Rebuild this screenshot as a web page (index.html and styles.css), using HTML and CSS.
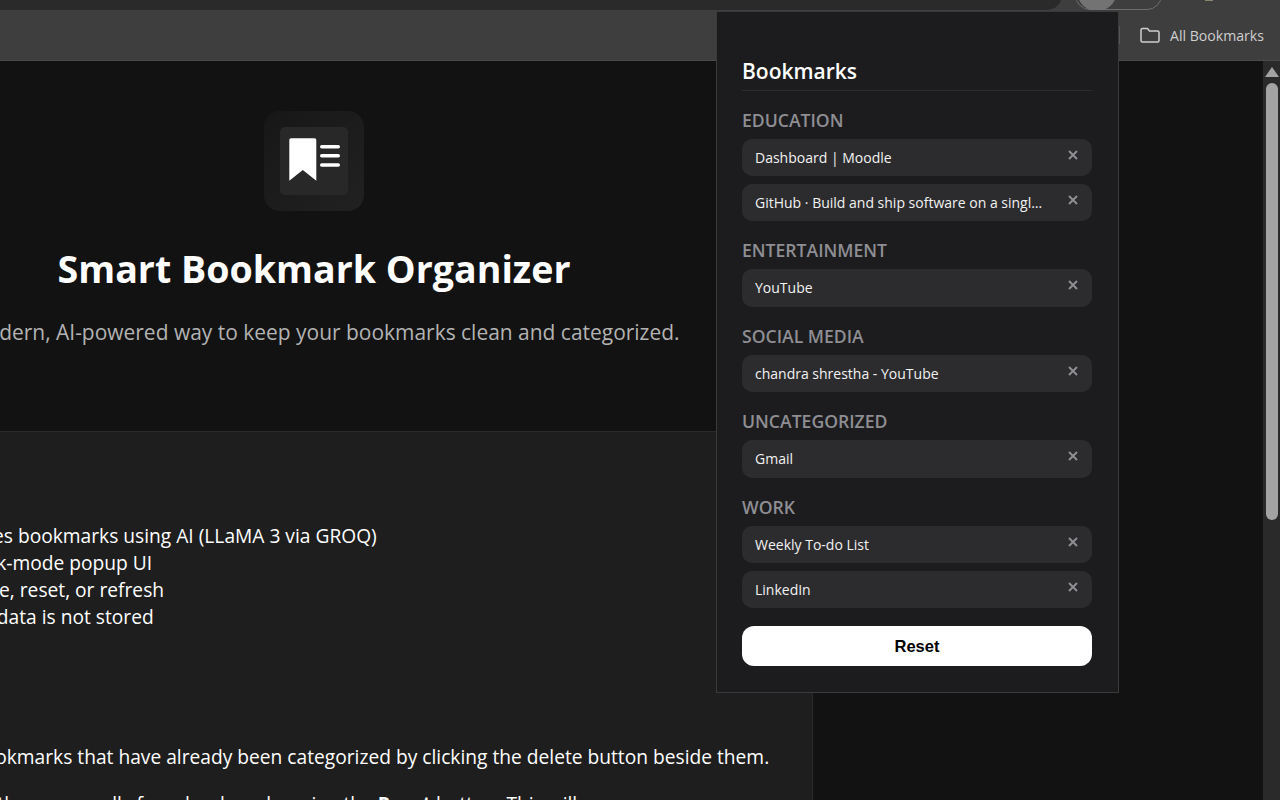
FILE: index.html

```html
<!DOCTYPE html>
<html lang="en">

<head>
  <meta charset="UTF-8">
  <meta name="viewport" content="width=device-width, initial-scale=1.0">
  <title>Smart Bookmark Organizer</title>
  <link rel="stylesheet" href="styles.css">
</head>

<body>
  <header class="toolbar">
    <div class="top-row">
      <div class="omnibox"></div>
      <div class="profile-pill"><span class="avatar"></span></div>
      <span class="ext-dot"></span>
    </div>
    <div class="bookmarks-bar">
      <span class="bar-sep"></span>
      <svg class="folder-icon" width="22" height="18" viewBox="0 0 22 18">
        <path d="M2 4a1.5 1.5 0 0 1 1.5-1.5h5l2 2.5h8a1.5 1.5 0 0 1 1.5 1.5v8a1.5 1.5 0 0 1-1.5 1.5h-15A1.5 1.5 0 0 1 2 14.5z" fill="none" stroke="#cfcfcf" stroke-width="1.5" stroke-linejoin="round" />
      </svg>
      <span class="bar-label">All Bookmarks</span>
    </div>
  </header>

  <div class="viewport">
    <main class="page">
      <section class="hero">
        <div class="logo">
          <div class="logo-inner">
            <svg width="68" height="68" viewBox="0 0 68 68">
              <path d="M9.3 13a1.7 1.7 0 0 1 1.7-1.7h23.6a1.7 1.7 0 0 1 1.7 1.7v40.7L22.8 43 9.3 53.7z" fill="#fff" />
              <rect x="40" y="18" width="20" height="3.4" rx="1.7" fill="#fff" />
              <rect x="40" y="27" width="20" height="3.4" rx="1.7" fill="#fff" />
              <rect x="40" y="36.3" width="20" height="3.4" rx="1.7" fill="#fff" />
            </svg>
          </div>
        </div>
        <h1>Smart Bookmark Organizer</h1>
        <p class="tagline">A modern, AI-powered way to keep your bookmarks clean and categorized.</p>
      </section>

      <section class="content">
        <ul class="features">
          <li>Categorizes bookmarks using AI (LLaMA 3 via GROQ)</li>
          <li>Sleek, dark-mode popup UI</li>
          <li>Easy delete, reset, or refresh</li>
          <li>Browsing data is not stored</li>
        </ul>
        <p class="usage">Delete bookmarks that have already been categorized by clicking the delete button beside them.</p>
        <p class="usage">Or delete them manually from bookmarks using the <b>Reset</b> button. This will</p>
      </section>
    </main>
    <div class="gutter"></div>
    <div class="scrollbar">
      <span class="scroll-arrow"></span>
      <span class="scroll-thumb"></span>
    </div>
  </div>

  <aside class="popup">
    <h2>Bookmarks</h2>

    <section class="category">
      <h3>EDUCATION</h3>
      <div class="item"><span>Dashboard | Moodle</span><svg class="close" width="10" height="10" viewBox="0 0 10 10"><path d="M1 1l8 8M9 1l-8 8" /></svg></div>
      <div class="item"><span>GitHub · Build and ship software on a single collaborative platform</span><svg class="close" width="10" height="10" viewBox="0 0 10 10"><path d="M1 1l8 8M9 1l-8 8" /></svg></div>
    </section>

    <section class="category">
      <h3>ENTERTAINMENT</h3>
      <div class="item"><span>YouTube</span><svg class="close" width="10" height="10" viewBox="0 0 10 10"><path d="M1 1l8 8M9 1l-8 8" /></svg></div>
    </section>

    <section class="category">
      <h3>SOCIAL MEDIA</h3>
      <div class="item"><span>chandra shrestha - YouTube</span><svg class="close" width="10" height="10" viewBox="0 0 10 10"><path d="M1 1l8 8M9 1l-8 8" /></svg></div>
    </section>

    <section class="category">
      <h3>UNCATEGORIZED</h3>
      <div class="item"><span>Gmail</span><svg class="close" width="10" height="10" viewBox="0 0 10 10"><path d="M1 1l8 8M9 1l-8 8" /></svg></div>
    </section>

    <section class="category">
      <h3>WORK</h3>
      <div class="item"><span>Weekly To-do List</span><svg class="close" width="10" height="10" viewBox="0 0 10 10"><path d="M1 1l8 8M9 1l-8 8" /></svg></div>
      <div class="item"><span>LinkedIn</span><svg class="close" width="10" height="10" viewBox="0 0 10 10"><path d="M1 1l8 8M9 1l-8 8" /></svg></div>
    </section>

    <button class="reset" type="button">Reset</button>
  </aside>
</body>

</html>
```

FILE: styles.css

```css
* {
  box-sizing: border-box;
}

body {
  font-family: "Open Sans", "Noto Sans", sans-serif;
  margin: 0;
  height: 800px;
  overflow: hidden;
  display: flex;
  flex-direction: column;
  background-color: #121212;
  color: #fff;
}

.toolbar {
  height: 61px;
  flex: none;
  background-color: #3e3e3e;
  border-bottom: 1px solid #4a4a4a;
}

.top-row {
  height: 10px;
  overflow: hidden;
  display: flex;
  align-items: flex-end;
}

.omnibox {
  width: 1062px;
  height: 30px;
  flex: none;
  background-color: #2a2a2a;
  border-radius: 0 18px 18px 0;
}

.profile-pill {
  width: 87px;
  height: 30px;
  flex: none;
  margin-left: 13px;
  border: 1px solid #6e6e6e;
  border-radius: 18px;
  padding-left: 1px;
}

.avatar {
  display: block;
  width: 40px;
  height: 40px;
  margin-top: -10px;
  border-radius: 50%;
  background-color: #737373;
}

.ext-dot {
  width: 8px;
  height: 1px;
  flex: none;
  align-self: flex-start;
  margin-left: 43px;
  background-color: #8a8470;
}

.bookmarks-bar {
  height: 50px;
  display: flex;
  align-items: center;
  justify-content: flex-end;
  padding-right: 16px;
}

.bar-sep {
  width: 1px;
  height: 18px;
  margin-right: 19px;
  background-color: #555;
}

.folder-icon {
  margin-right: 9px;
}

.bar-label {
  font-size: 14.1px;
  color: #cfcfcf;
}

.viewport {
  flex: 1;
  min-height: 0;
  display: flex;
}

.page {
  width: 813px;
  flex: none;
  overflow: hidden;
  background-color: #1e1e1e;
  border-right: 1px solid #2a2a2a;
}

.hero {
  width: 1000px;
  height: 371px;
  margin-left: -186px;
  padding-top: 50px;
  text-align: center;
  background-color: #121212;
  border-bottom: 1px solid #2a2a2a;
}

.logo {
  width: 100px;
  height: 100px;
  margin: 0 auto;
  display: flex;
  align-items: center;
  justify-content: center;
  background: linear-gradient(135deg, #171717, #212121);
  border-radius: 16px;
}

.logo-inner {
  width: 68px;
  height: 68px;
  background-color: #282828;
  border-radius: 5px;
}

.logo-inner svg {
  display: block;
}

h1 {
  margin: 32px 0 0;
  font-size: 37.6px;
  line-height: 52px;
  font-weight: 700;
}

.tagline {
  margin: 22px 0 0;
  font-size: 20.96px;
  line-height: 30px;
  color: #b3b3b3;
}

.content {
  width: 1000px;
  margin-left: -186px;
  padding: 90px 0 0 95px;
  font-size: 19.2px;
  line-height: 27px;
  white-space: nowrap;
}

.features {
  margin: 0 0 113px;
  padding: 0;
  list-style: none;
}

.usage {
  margin: 0 0 20px;
}

.gutter {
  flex: 1;
  background-color: #121212;
}

.scrollbar {
  width: 17px;
  flex: none;
  background-color: #2a2a2a;
  display: flex;
  flex-direction: column;
  align-items: center;
  padding-top: 6px;
}

.scroll-arrow {
  width: 0;
  height: 0;
  border-left: 7px solid transparent;
  border-right: 7px solid transparent;
  border-bottom: 10px solid #a3a3a3;
}

.scroll-thumb {
  width: 12px;
  height: 437px;
  margin-top: 6px;
  border-radius: 6px;
  background-color: #a3a3a3;
}

.popup {
  position: absolute;
  left: 716px;
  top: 11px;
  width: 403px;
  height: 682px;
  padding: 44px 26px 0 25px;
  background-color: #1c1c1e;
  border: 1px solid #3a3a3a;
}

.popup h2 {
  margin: 0 0 17.6px;
  padding-bottom: 4px;
  font-size: 21px;
  line-height: 30px;
  font-weight: 600;
  border-bottom: 1px solid #2c2c2e;
}

.category {
  margin-bottom: 18px;
  display: flex;
  flex-direction: column;
  gap: 7.5px;
}

.category h3 {
  margin: 0 0 -0.5px;
  font-size: 17.6px;
  line-height: 23px;
  font-weight: 600;
  color: #8e8e93;
}

.item {
  height: 37.5px;
  padding: 0 14px 0 13px;
  display: flex;
  align-items: center;
  justify-content: space-between;
  gap: 20px;
  font-size: 14px;
  color: #f2f2f2;
  background-color: #2c2c2e;
  border-radius: 10px;
}

.item span {
  min-width: 0;
  overflow: hidden;
  white-space: nowrap;
  text-overflow: ellipsis;
}

.close {
  flex: none;
  margin-top: -5px;
  fill: none;
  stroke: #8e8e93;
  stroke-width: 2;
}

.reset {
  display: block;
  width: 100%;
  height: 40px;
  font-family: "Liberation Sans", Arial, sans-serif;
  font-size: 16.5px;
  font-weight: bold;
  color: #000;
  background-color: #fff;
  border: none;
  border-radius: 12px;
}
```
